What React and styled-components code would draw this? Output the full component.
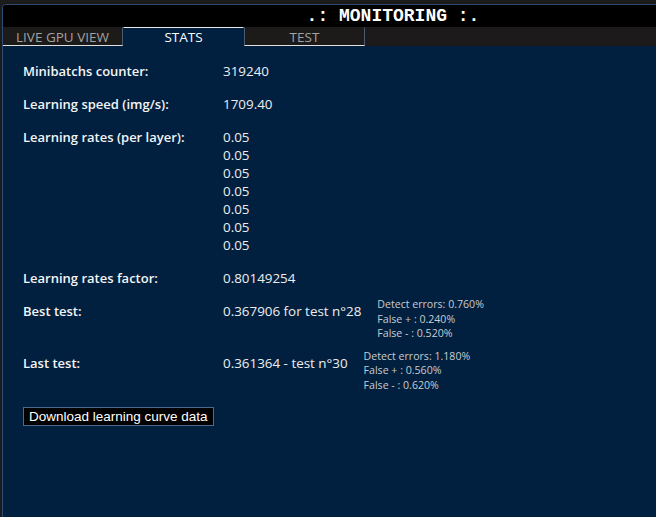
import styled, { createGlobalStyle } from "styled-components";

const GlobalStyle = createGlobalStyle`
  html, body {
    margin: 0;
    padding: 0;
    background: #1b1b1b;
    overflow: hidden;
  }
  body {
    padding: 4px 0 0 2px;
    height: 517px;
    box-sizing: border-box;
  }
`;

export default function App() {
  const tabs = ["LIVE GPU VIEW", "STATS", "TEST"];
  const rates = ["0.05", "0.05", "0.05", "0.05", "0.05", "0.05", "0.05"];

  return (
    <>
      <GlobalStyle />
      <Panel>
        <Header>.: MONITORING :.</Header>
        <TabBar>
          {tabs.map((t) => (
            <Tab key={t} $active={t === "STATS"}>
              {t}
            </Tab>
          ))}
        </TabBar>
        <Content>
          <Row>
            <Label>Minibatchs counter:</Label>
            <Value>319240</Value>
          </Row>
          <Row>
            <Label>Learning speed (img/s):</Label>
            <Value>1709.40</Value>
          </Row>
          <Row>
            <Label>Learning rates (per layer):</Label>
            <ValueList>
              {rates.map((r, i) => (
                <Value key={i}>{r}</Value>
              ))}
            </ValueList>
          </Row>
          <Row>
            <Label>Learning rates factor:</Label>
            <Value>0.80149254</Value>
          </Row>
          <Row>
            <Label>Best test:</Label>
            <Value>0.367906 for test n°28</Value>
            <Details>
              <span>Detect errors: 0.760%</span>
              <span>False + : 0.240%</span>
              <span>False - : 0.520%</span>
            </Details>
          </Row>
          <Row>
            <Label>Last test:</Label>
            <Value>0.361364 - test n°30</Value>
            <Details>
              <span>Detect errors: 1.180%</span>
              <span>False + : 0.560%</span>
              <span>False - : 0.620%</span>
            </Details>
          </Row>
          <DownloadButton>Download learning curve data</DownloadButton>
        </Content>
      </Panel>
    </>
  );
}

const Panel = styled.div`
  width: 780px;
  height: 530px;
  display: flex;
  flex-direction: column;
  border: 1px solid #2e4c72;
  border-top-left-radius: 4px;
  background: #01203f;
  overflow: hidden;
`;

const Header = styled.div`
  height: 22px;
  background: #000;
  color: #fff;
  font-family: "Liberation Mono", "Courier New", monospace;
  font-weight: bold;
  font-size: 18px;
  line-height: 22px;
  text-align: center;
`;

const TabBar = styled.div`
  display: flex;
  height: 19px;
  background: #1c1a1a;
`;

const Tab = styled.div`
  width: 121px;
  box-sizing: border-box;
  text-align: center;
  font-family: "Open Sans", sans-serif;
  font-size: 13.5px;
  line-height: 18px;
  color: ${({ $active }) => ($active ? "#ffffff" : "#a3a3a3")};
  background: ${({ $active }) => ($active ? "#01203f" : "#1d1a1a")};
  border-top: 1px solid ${({ $active }) => ($active ? "#e8e8e8" : "#1d1a1a")};
  border-bottom: ${({ $active }) => ($active ? "none" : "1px solid #e0e0e0")};
  border-left: 1px solid ${({ $active }) => ($active ? "transparent" : "#4a5a70")};
  border-right: 1px solid ${({ $active }) => ($active ? "transparent" : "#4a5a70")};
  &:first-child {
    border-left: none;
    width: 120px;
  }
`;

const Content = styled.div`
  flex: 1;
  display: flex;
  flex-direction: column;
  align-items: flex-start;
  gap: 15px;
  padding: 16px 20px;
  font-family: "Open Sans", sans-serif;
  font-size: 13px;
  line-height: 18px;
  color: #f2f2f2;
`;

const Row = styled.div`
  display: flex;
  align-items: flex-start;
`;

const Label = styled.div`
  width: 200px;
  font-weight: 600;
  color: #f4f4f4;
`;

const Value = styled.div`
  font-size: 13.4px;
  color: #eeeeee;
`;

const ValueList = styled.div`
  display: flex;
  flex-direction: column;
`;

const Details = styled.div`
  display: flex;
  flex-direction: column;
  margin: -5px 0 -2px 16px;
  font-size: 10.6px;
  line-height: 14.5px;
  color: #c8ccd2;
`;

const DownloadButton = styled.button`
  height: 19px;
  margin-top: 2px;
  padding: 0 5px;
  background: #000;
  color: #fff;
  border: 1px solid #4a6a90;
  font-family: "Liberation Sans", Arial, sans-serif;
  font-size: 13.5px;
  line-height: 17px;
  cursor: pointer;
`;
